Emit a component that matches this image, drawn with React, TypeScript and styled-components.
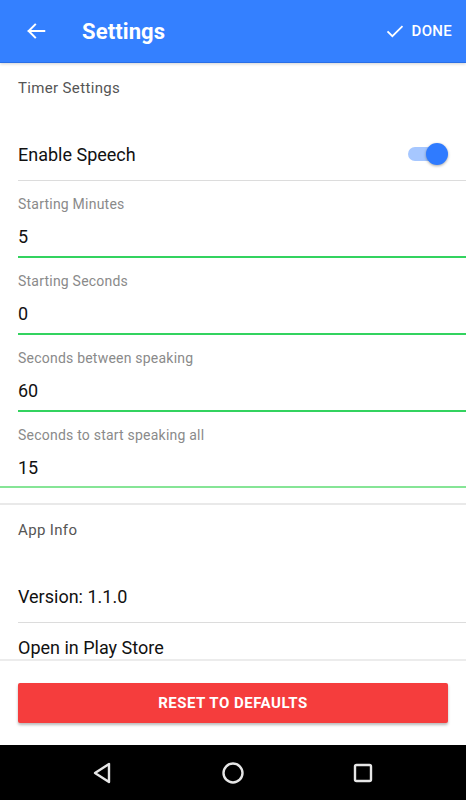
import styled, { createGlobalStyle } from "styled-components";

const GlobalStyle = createGlobalStyle`
  html, body {
    margin: 0;
    padding: 0;
    background: #ffffff;
    font-family: Roboto, "Noto Sans", sans-serif;
  }
`;

const Screen = styled.div`
  width: 466px;
  height: 800px;
  display: flex;
  flex-direction: column;
  overflow: hidden;
  background: #fff;
`;

const Header = styled.header`
  height: 62px;
  flex-shrink: 0;
  display: flex;
  align-items: center;
  background: #3480ff;
  border-bottom: 1px solid #2a6fe6;
  box-shadow: 0 1px 3px rgba(0, 0, 0, 0.18);
  color: #fff;
  position: relative;
  z-index: 1;
`;

const IconButton = styled.button`
  width: 46px;
  height: 46px;
  margin-left: 13px;
  border: 0;
  padding: 0;
  background: none;
  display: flex;
  align-items: center;
  justify-content: center;
  color: #fff;
`;

const Title = styled.h1`
  margin: 0 0 0 23px;
  flex: 1;
  font-size: 22px;
  font-weight: 700;
  letter-spacing: 0.1px;
`;

const DoneButton = styled.button`
  display: flex;
  align-items: center;
  gap: 8px;
  margin-right: 14px;
  border: 0;
  padding: 0;
  background: none;
  color: #fff;
  font-family: inherit;
  font-size: 15px;
  font-weight: 500;
  letter-spacing: 0.3px;
`;

const Content = styled.main`
  flex: 1;
  overflow: hidden;
`;

const SectionLabel = styled.div`
  height: 67px;
  box-sizing: border-box;
  padding: 16px 0 0 18px;
  font-size: 15px;
  line-height: 18px;
  letter-spacing: 0.35px;
  color: #555;
`;

const Row = styled.div`
  height: 51px;
  box-sizing: border-box;
  padding-bottom: 2px;
  margin-left: 18px;
  display: flex;
  align-items: center;
  justify-content: space-between;
  border-bottom: 1px solid #dcdcdc;
  font-size: 18px;
  color: #111;
`;

const PlainRow = styled(Row)`
  border-bottom: 0;
`;

const Toggle = styled.div`
  position: relative;
  width: 32px;
  height: 14px;
  margin-right: 26px;
  border-radius: 7px;
  background: #a6c7ff;
`;

const Thumb = styled.span`
  position: absolute;
  top: -4px;
  right: -8px;
  width: 22px;
  height: 22px;
  border-radius: 50%;
  background: #2f7bff;
  box-shadow: 0 1px 3px rgba(0, 0, 0, 0.35);
`;

const Field = styled.div<{ $wide?: boolean }>`
  margin-left: ${(p) => (p.$wide ? "0" : "18px")};
  padding-top: 14px;
  padding-bottom: ${(p) => (p.$wide ? "6px" : "7px")};
  border-bottom: 2px solid ${(p) => (p.$wide ? "#86e596" : "#33d35f")};
`;

const FieldLabel = styled.div<{ $wide?: boolean }>`
  padding-left: ${(p) => (p.$wide ? "18px" : "0")};
  font-size: 14px;
  line-height: 18px;
  letter-spacing: 0.22px;
  color: #8a8a8a;
`;

const FieldValue = styled.div<{ $wide?: boolean }>`
  margin-top: 12px;
  padding-left: ${(p) => (p.$wide ? "18px" : "0")};
  font-size: 18px;
  line-height: 24px;
  color: #111;
`;

const SectionDivider = styled.div`
  height: 2px;
  margin-top: 15px;
  background: #e9e9e9;
`;

const Footer = styled.footer`
  height: 86px;
  flex-shrink: 0;
  box-sizing: border-box;
  border-top: 2px solid #ececec;
  padding: 22px 18px 0;
`;

const ResetButton = styled.button`
  width: 100%;
  height: 40px;
  border: 0;
  border-radius: 2px;
  background: #f53d3d;
  color: #fff;
  font-family: inherit;
  font-size: 15px;
  font-weight: 700;
  letter-spacing: 0.5px;
  box-shadow: 0 2px 3px rgba(0, 0, 0, 0.28);
`;

const NavBar = styled.nav`
  height: 55px;
  flex-shrink: 0;
  background: #000;
  display: flex;
  align-items: center;
  justify-content: center;
  gap: 100px;
  color: #e6e6e6;
`;

const NavIcon = styled.svg`
  width: 30px;
  height: 30px;
`;

type FieldProps = { label: string; value: string; wide?: boolean };

const InputField = ({ label, value, wide }: FieldProps) => (
  <Field $wide={wide}>
    <FieldLabel $wide={wide}>{label}</FieldLabel>
    <FieldValue $wide={wide}>{value}</FieldValue>
  </Field>
);

export default function App() {
  return (
    <>
      <GlobalStyle />
      <Screen>
        <Header>
          <IconButton aria-label="Back">
            <svg width="22" height="22" viewBox="0 0 24 24" fill="none" stroke="#fff" strokeWidth="2.2" strokeLinecap="square">
              <path d="M21 12H4M11 5l-7 7 7 7" />
            </svg>
          </IconButton>
          <Title>Settings</Title>
          <DoneButton>
            <svg width="18" height="18" viewBox="0 0 24 24" fill="none" stroke="#fff" strokeWidth="2.4">
              <path d="M2 12.5l6.5 6.5L22 5.5" />
            </svg>
            DONE
          </DoneButton>
        </Header>

        <Content>
          <SectionLabel>Timer Settings</SectionLabel>
          <Row>
            Enable Speech
            <Toggle>
              <Thumb />
            </Toggle>
          </Row>
          <InputField label="Starting Minutes" value="5" />
          <InputField label="Starting Seconds" value="0" />
          <InputField label="Seconds between speaking" value="60" />
          <InputField label="Seconds to start speaking all" value="15" wide />
          <SectionDivider />

          <SectionLabel>App Info</SectionLabel>
          <Row>Version: 1.1.0</Row>
          <PlainRow>Open in Play Store</PlainRow>
        </Content>

        <Footer>
          <ResetButton>RESET TO DEFAULTS</ResetButton>
        </Footer>

        <NavBar>
          <NavIcon viewBox="0 0 30 30" fill="none" stroke="currentColor" strokeWidth="2.4" strokeLinejoin="round">
            <path d="M21 6v18L7 15z" />
          </NavIcon>
          <NavIcon viewBox="0 0 30 30" fill="none" stroke="currentColor" strokeWidth="2.4">
            <circle cx="15" cy="15" r="9.5" />
          </NavIcon>
          <NavIcon viewBox="0 0 30 30" fill="none" stroke="currentColor" strokeWidth="2.4">
            <rect x="7" y="7" width="16" height="16" rx="1.5" />
          </NavIcon>
        </NavBar>
      </Screen>
    </>
  );
}
